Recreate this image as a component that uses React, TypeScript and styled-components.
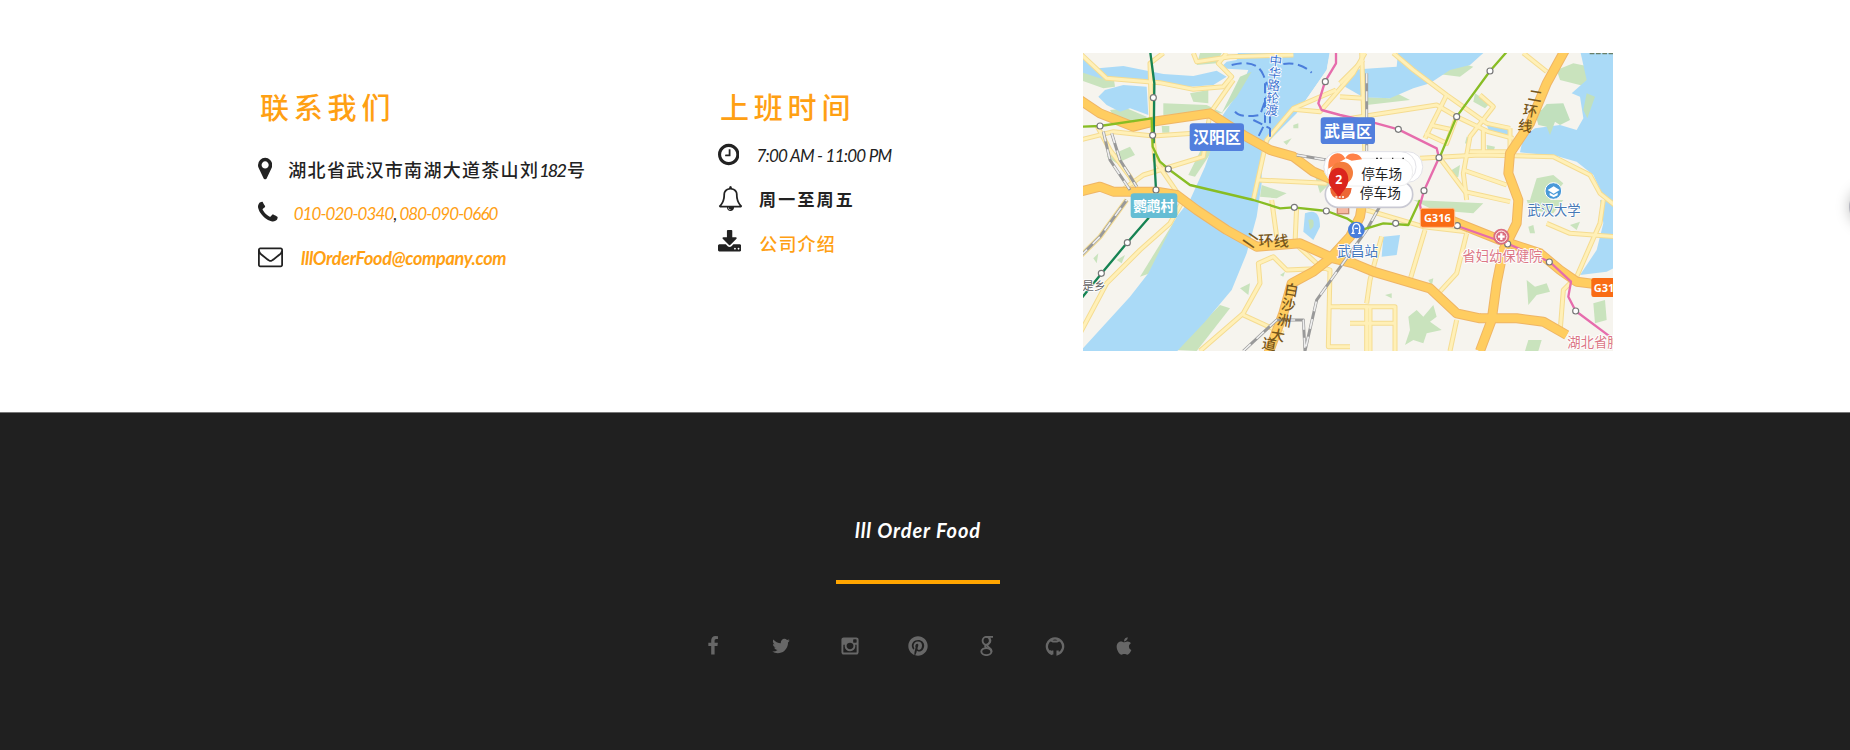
import React from 'react';
import styled, { createGlobalStyle } from 'styled-components';
import { FaPinterest, FaApple } from 'react-icons/fa';

const GlobalStyle = createGlobalStyle`
  * { box-sizing: border-box; }
  body { margin: 0; background: #fff; overflow: hidden; }
`;

const cjk = `'Noto Sans CJK SC', sans-serif`;

const Page = styled.div`
  position: relative;
  width: 1850px;
  height: 750px;
  overflow: hidden;
  font-family: Lato, ${cjk};
  color: #222;
`;

const Contact = styled.section`
  display: grid;
  grid-template-columns: 460px 365px 530px;
  align-items: start;
  height: 412px;
  padding: 53px 0 0 258px;
`;

const Column = styled.div<{ $gap: number }>`
  display: flex;
  flex-direction: column;
  gap: ${p => p.$gap}px;
  padding-top: 33px;
`;

const Heading = styled.h2`
  margin: 0;
  padding-left: 2px;
  height: 40px;
  font: 500 29px/40px ${cjk};
  letter-spacing: 4.8px;
  color: #ffa013;
`;

const Rows = styled.div`
  display: flex;
  flex-direction: column;
`;

const Row = styled.div`
  display: flex;
  align-items: center;
  gap: 16px;
  height: 44px;
  white-space: nowrap;
  svg { flex: none; }
`;

const Label = styled.span<{ $size: number; $spacing: number; $link?: boolean; $weight?: number; $slant?: boolean; $inset?: number }>`
  padding-top: 3px;
  padding-left: ${p => p.$inset ?? 0}px;
  font-size: ${p => p.$size}px;
  line-height: 24px;
  font-weight: ${p => p.$weight ?? 400};
  font-style: ${p => (p.$slant ? 'italic' : 'normal')};
  letter-spacing: ${p => p.$spacing}px;
  color: ${p => (p.$link ? '#ffa013' : '#222')};
  b { font-weight: inherit; color: #222; }
  i { letter-spacing: -1.8px; margin-right: 2px; }
`;

const MapFrame = styled.svg`
  display: block;
  width: 530px;
  height: 298px;
  font-family: ${cjk};
`;

const Footer = styled.footer`
  display: flex;
  flex-direction: column;
  align-items: center;
  height: 338px;
  padding: 103px 14px 0 0;
  border-top: 1px solid #777;
  background: #202020;
`;

const Brand = styled.div`
  height: 28px;
  font: italic 700 20px/28px Lato, sans-serif;
  letter-spacing: 0.9px;
  color: #fff;
`;

const Rule = styled.div`
  width: 164px;
  height: 4px;
  margin: 36px 0 52px;
  background: #ffa500;
`;

const Socials = styled.nav`
  display: flex;
  gap: 48.5px;
  color: #676767;
  svg { display: block; width: 20px; height: 20px; }
`;

const SideButton = styled.div`
  position: absolute;
  left: 1849px;
  top: 187px;
  width: 40px;
  height: 40px;
  border-radius: 50%;
  background: #b4b4be;
  box-shadow: 0 0 14px rgba(0, 0, 0, 0.25);
`;

const Glyph = ({ box, d, size = 25 }: { box: [number, number]; d: string; size?: number }) => (
  <svg viewBox={`${box[0]} 0 ${box[1]} 1792`} width={(box[1] / 1792) * size} height={size} fill="currentColor">
    <path d={d} />
  </svg>
);

const paths = {
  marker: 'M1152 640q0-106-75-181t-181-75-181 75-75 181 75 181 181 75 181-75 75-181zm256 0q0 109-33 179l-364 774q-16 33-47.5 52t-67.5 19-67.5-19-46.5-52l-365-774q-33-70-33-179 0-212 150-362t362-150 362 150 150 362z',
  phone: 'M1600 1240q0 27-10 70.5t-21 68.5q-21 50-122 106-94 51-186 51-27 0-52.5-3.5t-57.5-12.5-47.5-14.5-55.5-20.5-49-18q-98-35-175-83-128-79-264.500-215.500t-215.500-264.500q-48-77-83-175-3-9-18-49t-20.500-55.500-14.500-47.500-12.500-57.500-3.500-52.500q0-92 51-186 56-101 106-122 25-11 68.500-21t70.500-10q14 0 21 3 18 6 53 76 11 19 30 54t35 63.500 31 53.500q3 4 17.500 25t21.500 35.500 7 28.500q0 20-28.500 50t-62 55-62 53-28.500 46q0 9 5 22.500t8.500 20.500 14 24 11.500 19q76 137 174 235t235 174q2 1 19 11.500t24 14 20.500 8.500 22.500 5q18 0 46-28.500t53-62 55-62 50-28.500q14 0 28.500 7t35.500 21.500 25 17.500q25 15 53.500 31t63.500 35 54 30q70 35 76 53 3 7 3 21z',
  mail: 'M1664 1504v-768q-32 36-69 66-268 206-426 338-51 43-83 67t-86.5 48.5-102.5 24.5h-2q-48 0-102.5-24.5t-86.5-48.5-83-67q-158-132-426-338-37-30-69-66v768q0 13 9.5 22.5t22.5 9.5h1472q13 0 22.5-9.5t9.5-22.5zm0-1051v-24.5l-.5-13-3-12.5-5.5-9-9-7.5-14-2.5h-1472q-13 0-22.5 9.5t-9.5 22.5q0 168 147 284 193 152 401 317 6 5 35 29.5t46 37.5 44.5 31.5 50.5 27.5 43 9h2q20 0 43-9t50.5-27.5 44.5-31.5 46-37.5 35-29.5q208-165 401-317 54-43 100.5-115.5t46.5-131.5zm128-37v1088q0 66-47 113t-113 47h-1472q-66 0-113-47t-47-113v-1088q0-66 47-113t113-47h1472q66 0 113 47t47 113z',
  clock: 'M1024 544v448q0 14-9 23t-23 9h-320q-14 0-23-9t-9-23v-64q0-14 9-23t23-9h224v-352q0-14 9-23t23-9h64q14 0 23 9t9 23zm416 352q0-148-73-273t-198-198-273-73-273 73-198 198-73 273 73 273 198 198 273 73 273-73 198-198 73-273zm224 0q0 209-103 385.5t-279.5 279.5-385.5 103-385.5-103-279.5-279.5-103-385.5 103-385.5 279.5-279.5 385.5-103 385.5 103 279.5 279.5 103 385.5z',
  bell: 'M912 1696q0-16-16-16-59 0-101.5-42.5t-42.5-101.5q0-16-16-16t-16 16q0 73 51.5 124.5t124.5 51.5q16 0 16-16zm-666-288h1300q-266-300-266-832 0-51-24-105t-69-103-121.5-80.5-169.5-31.5-169.5 31.5-121.5 80.5-69 103-24 105q0 532-266 832zm1482 0q0 52-38 90t-90 38h-448q0 106-75 181t-181 75-181-75-75-181h-448q-52 0-90-38t-38-90q50-42 91-88t85-119.5 74.5-158.5 50-206 19.5-260q0-152 117-282.5t307-158.5q-8-19-8-39 0-40 28-68t68-28 68 28 28 68q0 20-8 39 190 28 307 158.5t117 282.5q0 139 19.5 260t50 206 74.5 158.5 85 119.5 91 88z',
  download: 'M1344 1344q0-26-19-45t-45-19-45 19-19 45 19 45 45 19 45-19 19-45zm256 0q0-26-19-45t-45-19-45 19-19 45 19 45 45 19 45-19 19-45zm128-224v320q0 40-28 68t-68 28h-1472q-40 0-68-28t-28-68v-320q0-40 28-68t68-28h465l135 136q58 56 136 56t136-56l136-136h464q40 0 68 28t28 68zm-325-569q17 41-14 70l-448 448q-18 19-45 19t-45-19l-448-448q-31-29-14-70 17-39 59-39h256v-448q0-26 19-45t45-19h256q26 0 45 19t19 45v448h256q42 0 59 39z',
  facebook: 'M1343 12v264h-157q-86 0-116 36t-30 108v189h293l-39 296h-254v759h-306v-759h-255v-296h255v-218q0-186 104-288.5t277-102.5q147 0 228 12z',
  twitter: 'M1684 408q-67 98-162 167 1 14 1 42 0 130-38 259.5t-115.5 248.5-184.5 210.5-258 146-323 54.5q-271 0-496-145 35 4 78 4 225 0 401-138-105-2-188-64.5t-114-159.5q33 5 61 5 43 0 85-11-112-23-185.5-111.5t-73.5-205.5v-4q68 38 146 41-66-44-105-115t-39-154q0-88 44-163 121 149 294.5 238.5t371.5 99.5q-8-38-8-74 0-134 94.5-228.5t228.5-94.5q140 0 236 102 109-21 205-78-37 115-142 178 93-10 186-50z',
  instagram: 'M1490 1426v-648h-135q20 63 20 131 0 126-64 232.5t-174 168.5-240 62q-197 0-337-135.5t-140-327.5q0-68 20-131h-141v648q0 26 17.5 43.5t43.5 17.5h1069q25 0 43-17.5t18-43.5zm-284-533q0-124-90.5-211.5t-218.5-87.5q-127 0-217.5 87.5t-90.5 211.5 90.5 211.5 217.5 87.5q128 0 218.5-87.5t90.5-211.5zm284-360v-165q0-28-20-48.5t-49-20.5h-174q-29 0-49 20.5t-20 48.5v165q0 29 20 49t49 20h174q29 0 49-20t20-49zm174-208v1142q0 81-58 139t-139 58h-1142q-81 0-139-58t-58-139v-1142q0-81 58-139t139-58h1142q81 0 139 58t58 139z',
};

const GoogleMark = () => (
  <svg viewBox="0 0 20 20" fill="none" stroke="currentColor" strokeWidth="1.9">
    <ellipse cx="9.200" cy="4.800" rx="3.600" ry="3.900" />
    <ellipse cx="9.400" cy="15.600" rx="5.100" ry="3.500" />
    <path d="M9 .9h7M12 1.500q3 3.500-.5 6.300q-2.300 1.800 0 3.300q2.800 1.700 3 4.500M9 8.700q-2 2 .8 3.400" />
  </svg>
);

const GithubMark = () => (
  <svg viewBox="0 0 20 20" fill="none" stroke="currentColor">
    <path d="M7.400 18.200A8.100 8.100 0 1 1 12.600 18.200V14.500" strokeWidth="2.300" />
    <path d="M7.400 18.500V14.500M7.500 16.200Q5.500 16.600 4.500 14.500" strokeWidth="2" />
    <path d="M4.800 3.800L8 5.500H12L15.200 3.800" strokeWidth="2" />
  </svg>
);

const water = [
  'M475 0H750L740 60L650 190L570 270L545 325L545 400L530 500L500 610L455 720L375 815L290 905H0L150 740L205 670L290 500L330 450L375 350L400 280L425 200L480 120L505 60L420 55L440 35L470 30Z',
  'M0 15L55 55L130 48L250 72L340 78L410 62L440 80L400 105L330 110L240 103L130 90L60 85L0 65Z',
  'M75 120L130 105L200 110L205 195L150 175L120 185L80 165L55 140Z',
  'M955 0H1220L1170 45L1110 60L1050 100L1000 115L930 145L850 142L795 110L810 60L880 55L950 50Z',
  'M1500 0H1610V460L1570 440L1540 375L1490 335L1430 318L1320 307L1330 260L1365 235L1440 225L1490 240L1510 205L1500 140L1475 130L1520 90Z',
  'M1560 450H1610V650L1580 665L1500 675L1550 600L1570 520Z',
  'M675 490Q720 470 720 530L700 570L670 545Z',
  'M910 560L960 555L950 615L905 620Z',
  'M1220 225L1290 235L1285 260L1230 250Z',
];
const greens = [
  'M10 60L100 75L105 110L70 115L0 90Z', 'M90 180L140 175L200 200V225L110 215Z', 'M80 320L150 290L165 315L110 340Z',
  'M250 160L380 165L430 190L250 195Z', 'M330 130L385 120V160L340 155Z', 'M360 9H425L410 40L350 45Z',
  'M385 255L405 290L345 380L325 375Z', 'M545 405L620 430L590 445L540 440Z', 'M700 360L760 390L720 430Z',
  'M180 680L285 510L300 540L210 670Z', 'M290 900L420 765L450 775L350 903Z', 'M480 715L510 700L505 735Z',
  'M1020 65L1140 80L1180 50L1130 35L1060 90L950 130L990 150L860 165L840 140L930 145Z',
  'M1480 40L1530 50L1520 110L1440 90L1430 60Z', 'M1370 385L1420 375L1450 400L1410 450H1350Z',
  'M1000 450L1210 460L1180 490L1060 480Z', 'M1340 450H1450L1420 490L1350 480Z',
  'M985 800L1010 780L1030 800L1060 765L1070 800L1050 815L1085 840L1040 850L1030 880L1000 870L975 885L990 840Z',
  'M1340 690L1365 710L1400 700L1410 725L1370 735L1345 765Z', 'M1540 760L1575 750L1580 810L1545 820Z',
  'M1345 870L1385 870L1375 903H1335Z', 'M1185 130L1230 160L1215 175L1180 155Z', 'M1115 360L1140 345L1135 380L1120 385Z',
  'M1160 260L1175 265L1170 285L1155 280Z', 'M1220 285L1245 290L1240 305L1222 302Z', 'M1045 690L1060 685L1055 710Z',
  'M640 225L655 220L655 235H640Z', 'M610 275L635 265L620 285Z', 'M245 228H268V248H247Z', 'M110 630L135 615L125 640Z', 'M600 675L615 665L610 680Z',
  'M40 625L55 610L50 640Z', 'M1345 530L1360 525L1365 550H1350Z', 'M1470 525L1500 515L1490 540Z', 'M915 735L935 730V745Z',
];
const minorRoads = [
  'M0 270L100 245L220 258L340 250', 'M0 10L80 85L240 98L340 118L430 110L455 80L415 40L440 9', 'M250 9L210 40L215 210L225 330L300 440',
  'M50 225L90 300L150 380L175 425', 'M120 425L190 375L370 320L390 190L460 90', 'M340 9L350 35L450 20L640 15',
  'M768 120L640 175L560 270L520 450', 'M640 178L720 185L768 130L820 70L855 9', 'M535 390L740 400', 'M0 620L60 560L140 450',
  'M0 850L80 700L180 600L270 520L310 450', 'M360 903L490 790L540 700L535 640L580 620L620 660L740 655', 'M490 795L610 850',
  'M575 450L590 560', 'M650 470L645 580L720 650L750 660L745 890H810M745 770H945V903M870 770V903M810 820H945',
  'M940 9L1000 60L1100 135L1220 220L1290 235', 'M780 210L1070 165L1130 200L1225 245L1300 265', 'M1035 265L1100 135',
  'M1035 250L1100 280L1130 200M1050 225L1120 240', 'M1200 135L1240 170L1170 260L1150 370L1160 450', 'M1020 325L1200 315L1420 320L1480 350L1530 375L1560 430L1610 470',
  'M1080 325L1155 425L1290 455', 'M1150 360L1280 405', 'M1210 240V310M1290 235V310M1170 305H1280', 'M860 480L1030 530L1160 545',
  'M905 560L870 690L860 760M1035 540L990 690M1160 550L1130 670L1075 730L1130 780', 'M1130 810L1110 903', 'M780 770H860V903',
  'M1400 520L1470 550L1610 560', 'M1570 450L1560 520L1490 680L1450 720L1440 850', 'M1330 9L1400 65', 'M780 100L850 30M780 140L850 145M845 9L855 320',
];
const majorRoads = [
  'M0 150L60 190L160 230L220 215L390 190L490 255L570 300L640 320L700 365L770 395',
  'M0 425L60 410L100 425L230 425L290 435L350 480L440 540L530 590L660 580L760 625L820 640L880 665L1050 715L1130 790L1200 805L1310 805L1390 815L1460 855',
  'M1455 0L1400 100L1350 220L1290 310L1285 370L1315 450L1310 520L1270 600L1250 700L1235 810L1200 903',
  'M565 910L610 790L635 700L700 665L750 625L810 560L840 500L850 440', 'M1110 510L1260 570L1380 610L1440 660L1490 695L1610 710',
];
const rails = ['M860 70V330', 'M70 245L90 330L150 420M95 250L120 330L170 410', 'M650 315L740 330', 'M0 620L60 560L140 450', 'M490 903L590 810L670 810L675 903L710 750L860 540L910 450'];
const metros: [string, string][] = [
  ['M210 0L223 100L221 280M222 310L228 420M228 455L205 505L140 580L65 670L0 750', '#168353'],
  ['M0 230L60 228L215 205L218 290L240 335L265 357L330 405L520 450L600 475L640 472L740 483L800 505L850 538L910 520L985 525L1020 450M1285 0L1230 63L1130 200L1080 320', '#88bd24'],
  ['M768 0V40L735 95L715 160L725 180L780 195L870 215L955 238L1070 295L1077 323L1032 422L1020 465L1030 515L1132 528L1285 582L1410 636L1473 695L1465 740L1487 783L1590 860', '#e66cac'],
];
const stations = [[220, 143], [60, 228], [218, 256], [265, 357], [228, 420], [736, 95], [955, 238], [1077, 323], [1130, 200], [1230, 63], [1032, 422], [643, 472], [739, 483], [947, 520], [1132, 527], [1283, 582], [1408, 636], [1487, 783], [142, 578], [64, 670]];

type MapText = { x: number; y: number; t: string; c: string; s?: number; r?: number; w?: number };
const mapTexts: MapText[] = [
  ...Array.from('中华路轮渡').map((t, i) => ({ x: 587 - i * 3, y: 46 + i * 37, t, c: '#3d74d1', s: 38, r: 6 })),
  ...Array.from('二环线').map((t, i) => ({ x: 1365 - i * 15, y: 153 + i * 45, t, c: '#78571c', s: 43, r: 10, w: 500 })),
  ...Array.from('二环线').map((t, i) => ({ x: 512 + i * 46, y: 586 + i * 2, t, c: '#78571c', s: 45, r: i ? -3 : 35, w: 500 })),
  ...Array.from('白沙洲大道').map((t, i) => ({ x: [634, 625, 613, 593, 567][i], y: [736, 780, 827, 872, 898][i], t, c: '#78571c', s: 43, r: 10, w: 500 })),
  { x: 1422, y: 495, t: '武汉大学', c: '#4779b6', s: 40 },
  { x: 833, y: 618, t: '武昌站', c: '#4779bd', s: 41 },
  { x: 1267, y: 632, t: '省妇幼保健院', c: '#db7786', s: 40 },
  { x: 1542, y: 892, t: '湖北省肿', c: '#db7786', s: 40 },
  { x: 42, y: 719, t: '是乡', c: '#666', s: 35 },
];

const CityMap = () => (
  <MapFrame viewBox="9 9 1590 894" preserveAspectRatio="none">
    <rect x="0" y="0" width="1610" height="910" fill="#f6f4ee" />
    {greens.map(d => <path key={d} d={d} fill="#c9e3bd" />)}
    {water.map(d => <path key={d} d={d} fill="#aadaf7" />)}
    <path d="M750 9H850L800 70L740 110L650 190L740 60Z" fill="#f6f4ee" />
    <path d="M1360 170L1385 180L1400 162L1450 160L1470 210L1440 225L1425 215L1410 255L1400 230L1375 225ZM425 190L480 80L515 65L470 140ZM685 510Q705 500 700 530L690 540ZM1520 130L1545 140L1522 205L1510 180Z" fill="#c1e0bd" />
    <g fill="none" strokeLinejoin="round">
      {minorRoads.map(d => <path key={d} d={d} stroke="#f5dc91" strokeWidth="15" />)}
      {minorRoads.map(d => <path key={d} d={d} stroke="#fff0b8" strokeWidth="9" />)}
      {majorRoads.map(d => <path key={d} d={d} stroke="#efb565" strokeWidth="30" />)}
      {majorRoads.map(d => <path key={d} d={d} stroke="#ffcd60" strokeWidth="24" />)}
      {rails.map(d => (
        <g key={d}>
          <path d={d} stroke="#999" strokeWidth="9" />
          <path d={d} stroke="#eee" strokeWidth="5" strokeDasharray="30 24" />
        </g>
      ))}
      <path d="M455 45Q530 25 550 75T570 115M610 42Q660 35 695 68M465 185Q480 205 540 195L560 140M555 100V220L530 270M570 190V260M520 210L570 235" stroke="#4b7ddb" strokeWidth="6" strokeDasharray="30 14" />
      {metros.map(([d, c]) => <path key={d} d={d} stroke={c} strokeWidth="7" />)}
      {stations.map(([x, y]) => <circle key={`${x}-${y}`} cx={x} cy={y} r="9" fill="#fff" stroke="#777" strokeWidth="3.5" />)}
    </g>
    <g textAnchor="middle">
      {mapTexts.map(m => (
        <text key={`${m.x}-${m.t}`} x={m.x} y={m.y} fontSize={m.s} fontWeight={m.w} fill={m.c} stroke={m.w ? 'none' : '#fff'} strokeWidth="5" paintOrder="stroke" transform={`rotate(${m.r ?? 0} ${m.x} ${m.y - 14})`}>{m.t}</text>
      ))}
      <g fontWeight="700" fill="#fff">
        <rect x="329" y="220" width="163" height="83" rx="10" fill="#527fdd" />
        <text x="411" y="280" fontSize="48">汉阳区</text>
        <rect x="722" y="202" width="163" height="80" rx="10" fill="#527fdd" />
        <text x="804" y="261" fontSize="48">武昌区</text>
        <rect x="152" y="430" width="140" height="74" rx="10" fill="#65bdd4" />
        <text x="221" y="484" fontSize="41">鹦鹉村</text>
        <rect x="1021" y="475" width="103" height="57" rx="7" fill="#f96c14" stroke="#ffc18c" strokeWidth="3" />
        <text x="1072" y="515" fontSize="33" fontFamily="Open Sans, sans-serif">G316</text>
        <rect x="1534" y="684" width="100" height="57" rx="7" fill="#f96c14" />
        <text x="1572" y="725" fontSize="33" fontFamily="Open Sans, sans-serif">G31</text>
      </g>
    </g>
    <circle cx="1420" cy="423" r="25" fill="#4999d8" stroke="#fff" strokeWidth="3" />
    <path d="M1403 420L1421 409L1439 420L1421 431ZM1409 428L1421 435L1433 428V436L1421 442L1409 436Z" fill="#fff" />
    <circle cx="829" cy="540" r="25" fill="#477edc" />
    <path d="M824 550H817Q822 544 818 535Q820 521 829 521Q839 521 840 535Q836 544 841 550H834M824 535H834" fill="none" stroke="#fff" strokeWidth="4" />
    <circle cx="1264" cy="560" r="24" fill="#da6f81" />
    <circle cx="1264" cy="560" r="17" fill="none" stroke="#fff" strokeWidth="3" />
    <path d="M1264 550V570M1254 560H1274" stroke="#fff" strokeWidth="7" />
    <rect x="772" y="470" width="34" height="21" fill="#f6b7a0" stroke="#c88a70" strokeWidth="4" />

    <g fill="#fff" stroke="#e3e3e8" strokeWidth="3">
      <rect x="732" y="305" width="296" height="92" rx="45" />
      <rect x="732" y="305" width="276" height="92" rx="45" />
      <rect x="736" y="394" width="262" height="78" rx="38" stroke="#c9c9d3" strokeWidth="5" />
      <rect x="742" y="325" width="256" height="83" rx="40" stroke="#eee" />
    </g>
    <path d="M745 356Q742 314 772 310Q788 310 796 326L773 340ZM796 324A27 24 0 0 1 846 328L815 332Z" fill="#ff8148" />
    <circle cx="785" cy="369" r="34" fill="#f47d3c" />
    <path d="M750 414H815Q812 450 780 448Q752 447 750 414Z" fill="#ec6635" />
    <path d="M746 389C746 341 805 341 805 389C805 414 783 425 777 445C768 424 746 414 746 389Z" fill="#db251d" />
    <text x="776" y="401" fontSize="37" fontWeight="700" fill="#fff" textAnchor="middle" fontFamily="Open Sans, sans-serif">2</text>
    <path d="M766 441H792" stroke="#fff" strokeWidth="4" strokeDasharray="6 4" />
    <g fontSize="41" fill="#222" textAnchor="middle">
      <text x="905" y="388">停车场</text>
      <text x="901" y="444">停车场</text>
    </g>
    <path d="M888 325H894M901 325H905M936 325H940M967 325H972" stroke="#333" strokeWidth="4" />
    <path d="M1529 10H1600" stroke="#687f68" strokeWidth="5" strokeDasharray="14 5" />
  </MapFrame>
);

export default function App() {
  return (
    <Page>
      <GlobalStyle />
      <Contact>
        <Column $gap={20}>
          <Heading>联系我们</Heading>
          <Rows>
            <Row>
              <Glyph box={[384, 1024]} d={paths.marker} />
              <Label $size={18} $spacing={1.3} $weight={500}>湖北省武汉市南湖大道茶山刘<i>182</i>号</Label>
            </Row>
            <Row>
              <Glyph box={[192, 1408]} d={paths.phone} />
              <Label $size={17} $spacing={-0.9} $link $slant>010-020-0340<b>, </b>080-090-0660</Label>
            </Row>
            <Row>
              <Glyph box={[0, 1792]} d={paths.mail} />
              <Label $size={18} $spacing={-0.3} $weight={700} $link $slant $inset={2}>lllOrderFood@company.com</Label>
            </Row>
          </Rows>
        </Column>
        <Column $gap={6}>
          <Heading>上班时间</Heading>
          <Rows>
            <Row>
              <Glyph box={[128, 1536]} d={paths.clock} />
              <Label $size={17} $spacing={-0.75} $slant $inset={1}>7:00 AM - 11:00 PM</Label>
            </Row>
            <Row>
              <Glyph box={[0, 1792]} d={paths.bell} />
              <Label $size={17} $spacing={2.2} $weight={600}>周一至周五</Label>
            </Row>
            <Row>
              <Glyph box={[64, 1664]} d={paths.download} />
              <Label $size={18} $spacing={1.2} $weight={500} $link $inset={2}>公司介绍</Label>
            </Row>
          </Rows>
        </Column>
        <CityMap />
      </Contact>
      <Footer>
        <Brand>lll Order Food</Brand>
        <Rule />
        <Socials>
          <Glyph box={[0, 1792]} d={paths.facebook} />
          <Glyph box={[0, 1792]} d={paths.twitter} />
          <Glyph box={[0, 1792]} d={paths.instagram} />
          <FaPinterest />
          <GoogleMark />
          <GithubMark />
          <FaApple />
        </Socials>
      </Footer>
      <SideButton />
    </Page>
  );
}
